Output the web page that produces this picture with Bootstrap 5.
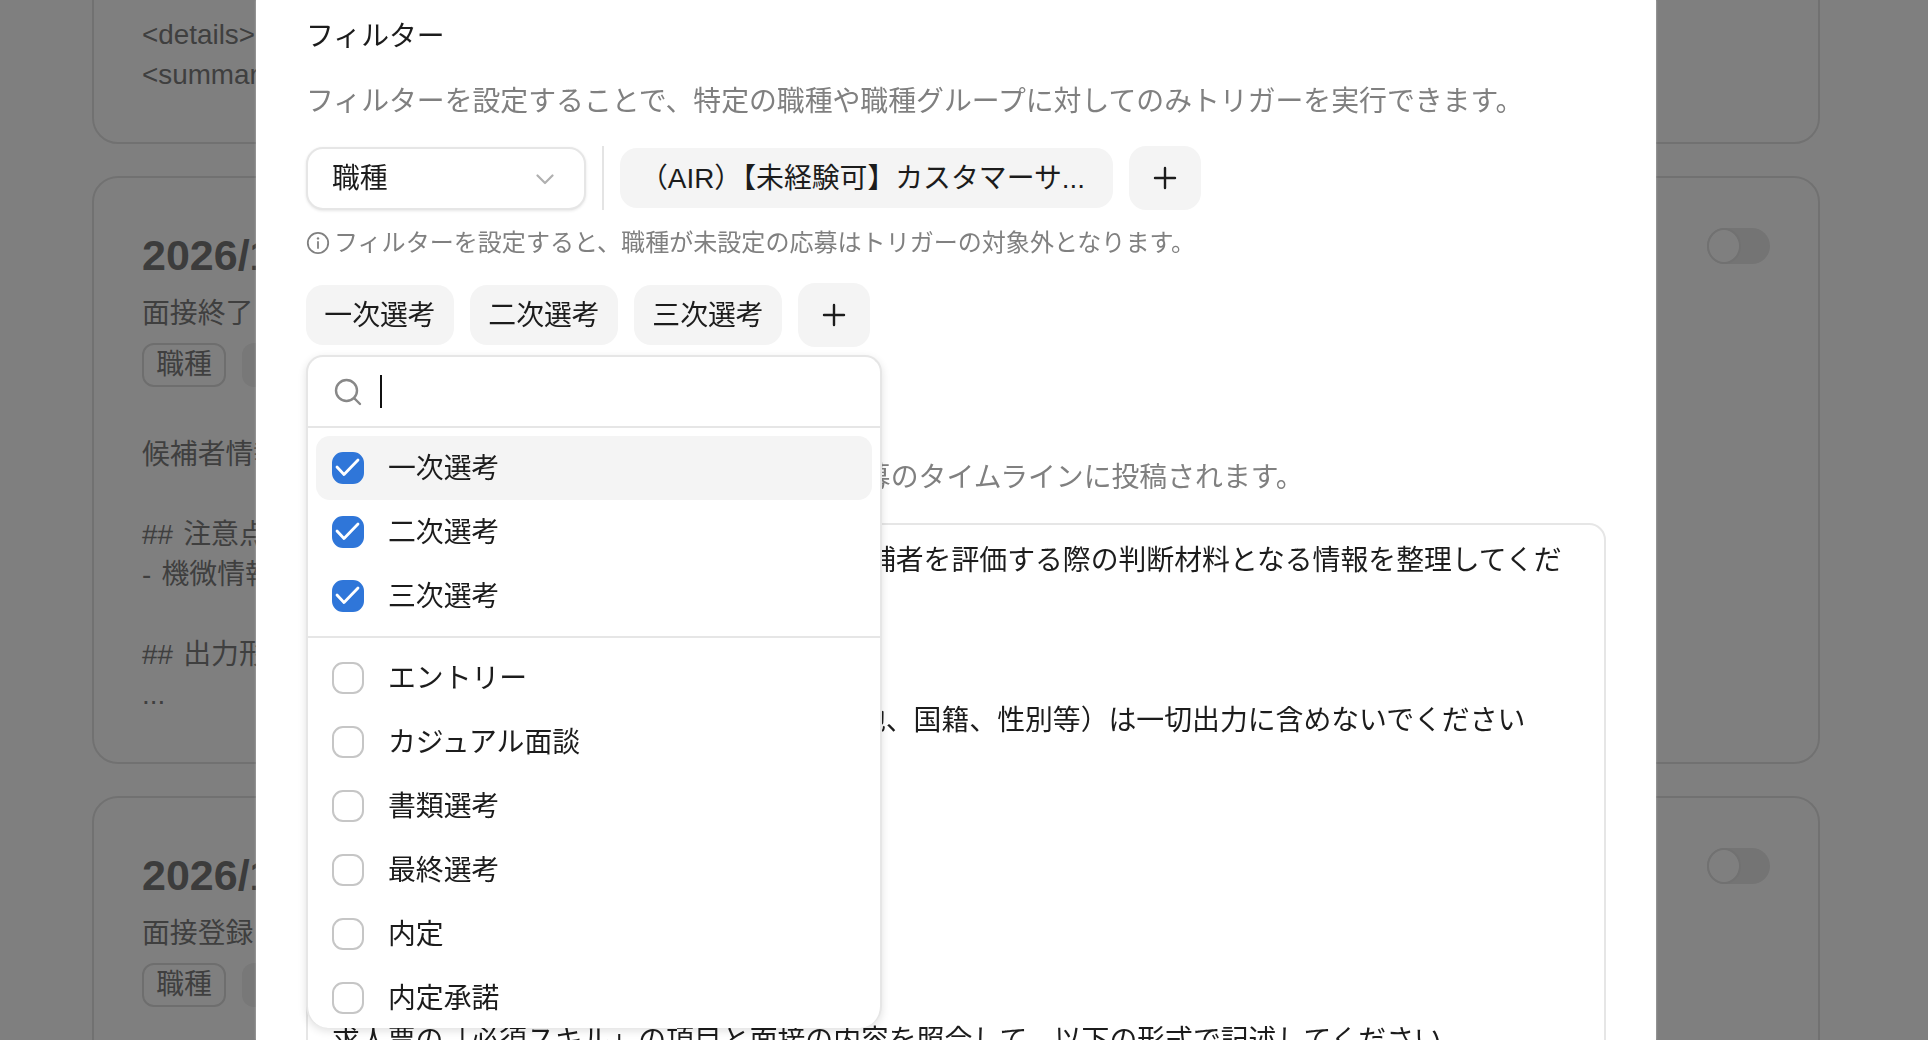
<!DOCTYPE html>
<html lang="ja">
<head>
<meta charset="utf-8">
<title>フィルター</title>
<link rel="stylesheet" href="https://cdn.jsdelivr.net/npm/bootstrap@5.3.0/dist/css/bootstrap.min.css">
<style>
html,body{height:100%;overflow:hidden;background:#fff}
body{font-family:"Liberation Sans","Noto Sans CJK JP",sans-serif;font-size:27.85px;line-height:40px;color:#1c1c1c}
.stage{width:1912px;height:1040px;position:relative;overflow:hidden}
.bg-list{padding:0 92px;margin-top:-200px;display:flex;flex-direction:column;gap:32px;color:#7e7e7e;word-spacing:2.5px}
.bg-card{border:2px solid #e3e3e3;border-radius:26px;padding:49px 48px 48px;height:588px;background:#fff}
.bg-card-first{height:344px;display:flex;flex-direction:column;justify-content:flex-end;padding-bottom:47px}
.bg-title{font-size:43px;line-height:56px;font-weight:700;color:#787878;margin-bottom:11px}
.bg-switch{width:63px;height:36px;border-radius:18px;background:#e8e8e8;margin-top:1px;flex:none;display:flex}
.bg-knob{width:34px;height:36px;border-radius:50%;background:#fff;border:2px solid #e2e2e2}
.bg-tag{border:2px solid #dcdcdc;border-radius:12px;height:44px;width:84px;text-align:center;line-height:40px;color:#7e7e7e}
.bg-tag2{height:44px;width:84px;border-radius:12px;background:#f0f0f0;margin-left:16px}
.bg-tags{margin-top:9px;margin-bottom:48px}
.panel{position:absolute;left:256px;top:0;width:1400px;height:1040px;background:#fff;padding:17px 50px 0;overflow:hidden;z-index:1060;box-shadow:0 0 2px rgba(255,255,255,.5)}
.muted-line{color:#808080;margin-top:25px;margin-bottom:-1px}
.filter-row{margin-top:25px;height:64px}
.select-box{width:280px;height:63px;border:2px solid #e6e6e6;border-radius:17px;background:#fff;box-shadow:0 1px 3px rgba(0,0,0,.1);padding:2px 30px 0 24px;font-size:27.85px;color:#1c1c1c}
.v-rule{width:2px;height:64px;background:#e4e4e4;margin:0 16px}
.chip-box{height:60px;background:#f4f4f4;border-radius:17px;display:flex;align-items:center;justify-content:center;white-space:nowrap;color:#1c1c1c;padding-top:2px}
.chip-job{width:493px;padding-right:8px}
.chip-stage{width:148px}
.plus-box{width:72px;height:64px;background:#f4f4f4;border-radius:17px;display:flex;align-items:center;justify-content:center;border:0;padding:0}
.hint-line{font-size:24.05px;color:#808080;margin-top:13px;gap:4px}
.chips-row{margin-top:20px;height:64px;position:relative;gap:16px}
.stage-menu{position:absolute;left:0;top:72px;width:576px;height:673px;background:#fff;border:2px solid #e6e6e6;border-bottom:0;border-radius:17px 17px 22px 22px;box-shadow:0 3px 8px rgba(0,0,0,.12);overflow:hidden;z-index:5}
.menu-search{height:71px;border-bottom:2px solid #e6e6e6;padding-left:26px;gap:18px}
.text-caret{width:2px;height:33px;background:#111}
.menu-group{padding:8px 8px 0}
.menu-group + .menu-group{border-top:2px solid #e6e6e6;margin-top:8px;padding-top:8px}
.menu-opt{height:64px;border-radius:14px;padding:0 16px;gap:24px;color:#1c1c1c}
.menu-opt span{padding-top:2px}
.menu-opt.is-hover{background:#f4f4f4}
.menu-opt .form-check-input{width:32px;height:32px;margin:0;border:2px solid #c6c6c6;border-radius:11px;flex:none}
.menu-opt .form-check-input:checked{background-color:#2f76d9;border-color:#2f76d9;background-size:100%;background-image:url("data:image/svg+xml,%3csvg xmlns='http://www.w3.org/2000/svg' viewBox='0 0 28 28'%3e%3cpath fill='none' stroke='%23fff' stroke-width='2.8' stroke-linecap='round' stroke-linejoin='round' d='M3 13l7 7.500L24 6'/%3e%3c/svg%3e")}
.sec-two{margin-top:46px}
.text-area-box{margin-top:26px;border:2px solid #e6e6e6;border-radius:17px;padding:16px 24px 0;white-space:pre;height:900px;color:#1c1c1c}
</style>
</head>
<body>
<div class="stage">
  <div class="bg-list">
    <div class="bg-card bg-card-first">
      <div>&lt;details&gt;</div>
      <div>&lt;summary&gt;</div>
    </div>
    <div class="bg-card">
      <div class="d-flex justify-content-between align-items-start">
        <div class="bg-title">2026/11/15</div>
        <div class="bg-switch"><div class="bg-knob"></div></div>
      </div>
      <div>面接終了</div>
      <div class="d-flex bg-tags"><div class="bg-tag">職種</div><div class="bg-tag2"></div></div>
      <div>候補者情報</div>
      <div>&nbsp;</div>
      <div>## 注意点</div>
      <div>- 機微情報</div>
      <div>&nbsp;</div>
      <div>## 出力形式</div>
      <div>...</div>
    </div>
    <div class="bg-card">
      <div class="d-flex justify-content-between align-items-start">
        <div class="bg-title">2026/11/15</div>
        <div class="bg-switch"><div class="bg-knob"></div></div>
      </div>
      <div>面接登録</div>
      <div class="d-flex bg-tags"><div class="bg-tag">職種</div><div class="bg-tag2"></div></div>
    </div>
  </div>

  <div class="modal-backdrop show"></div>

  <div class="panel">
    <div>フィルター</div>
    <div class="muted-line">フィルターを設定することで、特定の職種や職種グループに対してのみトリガーを実行できます。</div>

    <div class="d-flex align-items-center filter-row">
      <button type="button" class="btn select-box d-flex align-items-center justify-content-between">
        <span>職種</span>
        <svg width="18" height="11" viewBox="0 0 18 11" fill="none" stroke="#b0b0b0" stroke-width="2.2" stroke-linecap="round" stroke-linejoin="round"><path d="M1.500 1.500L9 9l7.500-7.500"/></svg>
      </button>
      <div class="v-rule"></div>
      <div class="chip-box chip-job">（AIR）【未経験可】カスタマーサ...</div>
      <button type="button" class="plus-box ms-3" aria-label="追加">
        <svg width="24" height="24" viewBox="0 0 24 24" stroke="#1c1c1c" stroke-width="2.4" stroke-linecap="round"><path d="M12 2v20M2 12h20"/></svg>
      </button>
    </div>

    <div class="d-flex align-items-center hint-line">
      <svg width="24" height="24" viewBox="0 0 24 24" fill="none" stroke="#808080" stroke-width="1.8"><circle cx="12" cy="12" r="10.200"/><path d="M12 11v6" stroke-linecap="round"/><circle cx="12" cy="7.400" r="1.200" fill="#808080" stroke="none"/></svg>
      <span>フィルターを設定すると、職種が未設定の応募はトリガーの対象外となります。</span>
    </div>

    <div class="d-flex align-items-center chips-row">
      <div class="chip-box chip-stage">一次選考</div>
      <div class="chip-box chip-stage">二次選考</div>
      <div class="chip-box chip-stage">三次選考</div>
      <button type="button" class="plus-box" aria-label="追加">
        <svg width="24" height="24" viewBox="0 0 24 24" stroke="#1c1c1c" stroke-width="2.4" stroke-linecap="round"><path d="M12 2v20M2 12h20"/></svg>
      </button>

      <div class="stage-menu">
        <div class="d-flex align-items-center menu-search">
          <svg width="28" height="28" viewBox="0 0 28 28" fill="none" stroke="#888" stroke-width="2.4" stroke-linecap="round"><circle cx="12.500" cy="12.500" r="10.500"/><path d="M20.500 20.500l5.500 5.500"/></svg>
          <div class="text-caret"></div>
        </div>
        <div class="menu-group">
          <label class="d-flex align-items-center menu-opt is-hover"><input class="form-check-input" type="checkbox" checked><span>一次選考</span></label>
          <label class="d-flex align-items-center menu-opt"><input class="form-check-input" type="checkbox" checked><span>二次選考</span></label>
          <label class="d-flex align-items-center menu-opt"><input class="form-check-input" type="checkbox" checked><span>三次選考</span></label>
        </div>
        <div class="menu-group">
          <label class="d-flex align-items-center menu-opt"><input class="form-check-input" type="checkbox"><span>エントリー</span></label>
          <label class="d-flex align-items-center menu-opt"><input class="form-check-input" type="checkbox"><span>カジュアル面談</span></label>
          <label class="d-flex align-items-center menu-opt"><input class="form-check-input" type="checkbox"><span>書類選考</span></label>
          <label class="d-flex align-items-center menu-opt"><input class="form-check-input" type="checkbox"><span>最終選考</span></label>
          <label class="d-flex align-items-center menu-opt"><input class="form-check-input" type="checkbox"><span>内定</span></label>
          <label class="d-flex align-items-center menu-opt"><input class="form-check-input" type="checkbox"><span>内定承諾</span></label>
        </div>
      </div>
    </div>

    <div class="sec-two">出力内容</div>
    <div class="muted-line">生成された内容は、選考中の該当候補者の応募のタイムラインに投稿されます。</div>
    <div class="text-area-box">あなたは優秀な採用担当者の補助 として候補者を評価する際の判断材料となる情報を整理してくだ<br>さい。<br><br>## 注意点<br>- 機微情報 （年齢、家族構成、宗教、出身地、国籍、性別等）は一切出力に含めないでください<br><br>## 出力形式<br><br><br><br><br><br>求人票の「必須スキル」の項目と面接の内容を照合して、以下の形式で記述してください</div>
  </div>
</div>
<script src="https://cdn.jsdelivr.net/npm/bootstrap@5.3.0/dist/js/bootstrap.bundle.min.js"></script>
</body>
</html>
